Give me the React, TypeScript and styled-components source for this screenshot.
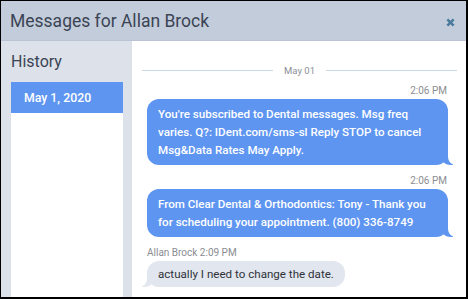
import React from 'react';
import styled, { createGlobalStyle } from 'styled-components';

const GlobalStyle = createGlobalStyle`
  html, body {
    margin: 0;
    padding: 0;
    background: #000;
  }
  body {
    font-family: Roboto, "Liberation Sans", Arial, sans-serif;
  }
`;

const Frame = styled.div`
  width: 465px;
  height: 296px;
  margin: 1px 2px 2px 1px;
  background: #fff;
  display: flex;
  flex-direction: column;
  overflow: hidden;
`;

const Header = styled.header`
  height: 40px;
  flex-shrink: 0;
  background: #c3ccdb;
  border-bottom: 1px solid #b9c3d3;
  box-sizing: border-box;
  display: flex;
  align-items: center;
  justify-content: space-between;
  padding: 0 11px 0 9px;
`;

const Title = styled.h1`
  margin: 0;
  font-size: 17.5px;
  font-weight: 400;
  color: #3b4454;
`;

const CloseButton = styled.button`
  border: 0;
  background: none;
  padding: 0;
  margin-top: 4px;
  width: 9px;
  height: 9px;
  display: flex;
  cursor: pointer;
`;

const Body = styled.div`
  flex: 1;
  display: flex;
  min-height: 0;
`;

const Sidebar = styled.aside`
  width: 131px;
  flex-shrink: 0;
  background: #dce1ea;
  padding: 11px 10px 0 10px;
  box-sizing: border-box;
  display: flex;
  flex-direction: column;
`;

const SidebarTitle = styled.h2`
  margin: 0 0 11px 0;
  font-size: 16px;
  font-weight: 400;
  color: #3b4454;
  line-height: 19px;
`;

const HistoryList = styled.ul`
  list-style: none;
  margin: 0;
  padding: 0;
  flex: 1;
  background: #fff;
  width: 112px;
`;

const HistoryItem = styled.li<{ active?: boolean }>`
  height: 31px;
  display: flex;
  align-items: center;
  padding-left: 13px;
  font-size: 12.3px;
  font-weight: 500;
  color: ${p => (p.active ? '#fff' : '#3b4454')};
  background: ${p => (p.active ? '#5e95f1' : 'transparent')};
`;

const Chat = styled.section`
  flex: 1;
  background: #fff;
  padding: 20px 18px 0 10px;
  display: flex;
  flex-direction: column;
`;

const DateDivider = styled.div`
  display: flex;
  align-items: center;
  gap: 11px;
  font-size: 9.5px;
  color: #8a8f97;
  margin-right: -9px;
  margin-bottom: 5px;
  height: 18px;

  &::before,
  &::after {
    content: '';
    flex: 1;
    height: 1px;
    background: #c9d9e6;
  }
`;

const Messages = styled.div`
  display: flex;
  flex-direction: column;
  padding-left: 5px;
`;

const Stamp = styled.div<{ align: 'left' | 'right' }>`
  font-size: 10px;
  color: #8a8d92;
  text-align: ${p => p.align};
  line-height: 13px;
  margin-bottom: 2px;
  padding-right: ${p => (p.align === 'right' ? '1px' : '0')};
`;

const Bubble = styled.div<{ out?: boolean }>`
  position: relative;
  align-self: ${p => (p.out ? 'flex-end' : 'flex-start')};
  width: ${p => (p.out ? '301px' : 'auto')};
  box-sizing: border-box;
  padding: ${p => (p.out ? '6px 11px' : '4px 11px')};
  border-radius: 12px;
  background: ${p => (p.out ? '#5e95f1' : '#e2e6ee')};
  color: ${p => (p.out ? '#fff' : '#2f333a')};
  font-size: 11.6px;
  font-weight: ${p => (p.out ? 500 : 400)};
  line-height: 18px;
  margin-bottom: 9px;

  &::before {
    content: '';
    position: absolute;
    bottom: 0;
    ${p => (p.out ? 'right: -5px;' : 'left: -5px;')}
    width: 14px;
    height: 12px;
    background: ${p => (p.out ? '#5e95f1' : '#e2e6ee')};
    ${p => (p.out ? 'border-bottom-left-radius: 12px;' : 'border-bottom-right-radius: 12px;')}
  }

  &::after {
    content: '';
    position: absolute;
    bottom: 0;
    ${p => (p.out ? 'right: -10px;' : 'left: -10px;')}
    width: 10px;
    height: 14px;
    background: #fff;
    ${p => (p.out ? 'border-bottom-left-radius: 8px;' : 'border-bottom-right-radius: 8px;')}
  }
`;

const BubbleText = styled.span`
  position: relative;
  z-index: 1;
`;

type Msg = {
  out: boolean;
  stamp: string;
  text: string;
};

const messages: Msg[] = [
  {
    out: true,
    stamp: '2:06 PM',
    text: "You're subscribed to Dental messages. Msg freq varies. Q?: IDent.com/sms-sl Reply STOP to cancel Msg&Data Rates May Apply.",
  },
  {
    out: true,
    stamp: '2:06 PM',
    text: 'From Clear Dental & Orthodontics: Tony - Thank you for scheduling your appointment. (800) 336-8749',
  },
  {
    out: false,
    stamp: 'Allan Brock 2:09 PM',
    text: 'actually I need to change the date.',
  },
];

const CloseIcon = () => (
  <svg width="9" height="9" viewBox="0 0 10 10">
    <path d="M1.5 1.5 L8.5 8.5 M8.5 1.5 L1.5 8.5" stroke="#4a7b9c" strokeWidth="2.8" strokeLinecap="butt" />
  </svg>
);

const App: React.FC = () => {
  return (
    <>
      <GlobalStyle />
      <Frame>
        <Header>
          <Title>Messages for Allan Brock</Title>
          <CloseButton aria-label="Close">
            <CloseIcon />
          </CloseButton>
        </Header>
        <Body>
          <Sidebar>
            <SidebarTitle>History</SidebarTitle>
            <HistoryList>
              <HistoryItem active>May 1, 2020</HistoryItem>
            </HistoryList>
          </Sidebar>
          <Chat>
            <DateDivider>May 01</DateDivider>
            <Messages>
              {messages.map((m, i) => (
                <React.Fragment key={i}>
                  <Stamp align={m.out ? 'right' : 'left'}>{m.stamp}</Stamp>
                  <Bubble out={m.out}>
                    <BubbleText>{m.text}</BubbleText>
                  </Bubble>
                </React.Fragment>
              ))}
            </Messages>
          </Chat>
        </Body>
      </Frame>
    </>
  );
};

export default App;
